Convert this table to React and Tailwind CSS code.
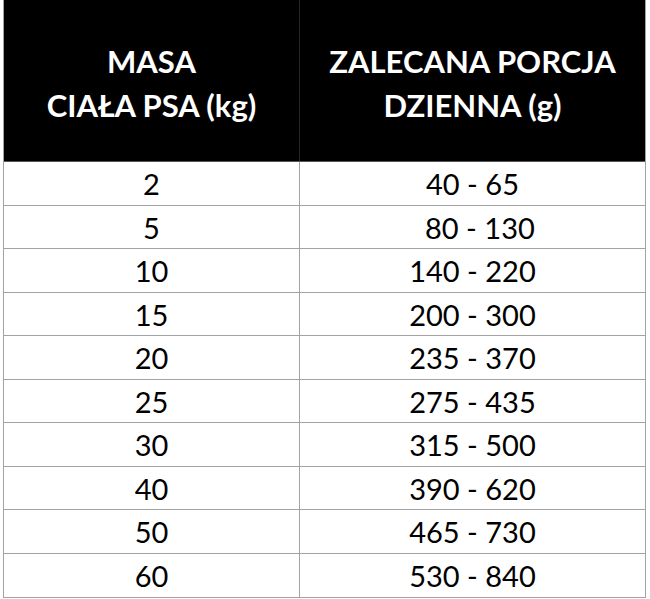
const rows = [
  ["2", "40 - 65"],
  ["5", "\u00a0\u00a080 - 130"],
  ["10", "140 - 220"],
  ["15", "200 - 300"],
  ["20", "235 - 370"],
  ["25", "275 - 435"],
  ["30", "315 - 500"],
  ["40", "390 - 620"],
  ["50", "465 - 730"],
  ["60", "530 - 840"],
];

const App = () => {
  return (
    <div className="w-[650px] h-[599px] bg-white pl-[3px] pr-[4px] font-['Lato',sans-serif]">
      <div className="border-l border-r border-b border-[#a3a3a3]">
        <div className="grid grid-cols-[296px_1fr] h-[162px] bg-black text-white font-bold text-[31px] leading-[44px] border-b border-[#555]">
          <div className="flex flex-col items-center justify-center pt-[4px] border-r border-[#262626]">
            <span>MASA</span>
            <span>CIAŁA PSA (kg)</span>
          </div>
          <div className="flex flex-col items-center justify-center pt-[4px]">
            <span>ZALECANA PORCJA</span>
            <span>DZIENNA (g)</span>
          </div>
        </div>
        {rows.map(([mass, portion], i) => (
          <div
            key={mass}
            className={
              "grid grid-cols-[296px_1fr] h-[43.5px] text-[29px] text-black " +
              (i < rows.length - 1 ? "border-b border-[#a3a3a3]" : "")
            }
          >
            <div className="flex items-center justify-center border-r border-[#a3a3a3]">
              {mass}
            </div>
            <div className="flex items-center justify-center whitespace-pre">{portion}</div>
          </div>
        ))}
      </div>
    </div>
  );
};

export default App;
